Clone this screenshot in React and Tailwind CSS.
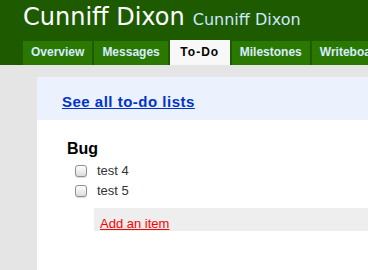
export default function App() {
  const tabs = [
    { label: "Overview", active: false },
    { label: "Messages", active: false },
    { label: "To-Do", active: true },
    { label: "Milestones", active: false },
    { label: "Writeboards", active: false },
  ];
  return (
    <div className="w-[368px] h-[270px] overflow-hidden bg-[#e5e5e5] flex flex-col">
      <header className="bg-[#1e5b00] h-[65px] shrink-0 pl-[23px] flex flex-col">
        <div className="h-[40px] pt-[3px] flex items-baseline whitespace-nowrap">
          <span className="text-white text-[24px] leading-[28px] font-['DejaVu_Sans',sans-serif]">
            Cunniff Dixon
          </span>
          <span className="ml-[8px] text-[#cfe8ff] text-[16px] leading-[20px] font-['DejaVu_Sans',sans-serif]">
            Cunniff Dixon
          </span>
        </div>
        <nav className="h-[25px] flex items-end gap-[2px] whitespace-nowrap font-['Liberation_Sans',sans-serif] font-bold text-[12px] leading-[14px]">
          {tabs.map((t) =>
            t.active ? (
              <div
                key={t.label}
                className="h-[25px] w-[60px] pt-[5px] bg-[#f8f8f8] text-black text-center tracking-[1px] shrink-0"
              >
                {t.label}
              </div>
            ) : (
              <div
                key={t.label}
                className="h-[24px] px-[8px] pt-[4px] bg-[#2a7800] text-[#d8ecff] shrink-0"
              >
                {t.label}
              </div>
            )
          )}
        </nav>
      </header>
      <main className="flex-1 pl-[37px] pt-[12px] font-['Liberation_Sans',sans-serif]">
        <div className="bg-white h-full">
          <div className="bg-[#ebf1fd] h-[43px] pl-[25px] pt-[13px]">
            <a href="#" className="text-[#0033cc] font-bold text-[15px] leading-[17px] tracking-[0.5px] underline">
              See all to-do lists
            </a>
          </div>
          <div className="pt-[20px]">
            <h2 className="pl-[30px] text-[16px] leading-[18px] font-bold text-black">Bug</h2>
            <div className="mt-[3px] pl-[38px]">
              {["test 4", "test 5"].map((item) => (
                <div key={item} className="h-[20px] flex items-center">
                  <span className="w-[12px] h-[12px] rounded-[3px] border border-[#8f8f8f] bg-gradient-to-b from-white to-[#dcdcdc] shadow-[0_1px_1px_rgba(0,0,0,0.15)] shrink-0" />
                  <span className="ml-[10px] text-[13px] leading-[20px] text-[#333]">{item}</span>
                </div>
              ))}
            </div>
            <div className="mt-[7px] ml-[57px] h-[23px] bg-[#eeeeee] pl-[6px] pt-[3px]">
              <a href="#" className="text-[#ff0000] text-[13px] leading-[16px] underline">
                Add an item
              </a>
            </div>
          </div>
        </div>
      </main>
    </div>
  );
}
